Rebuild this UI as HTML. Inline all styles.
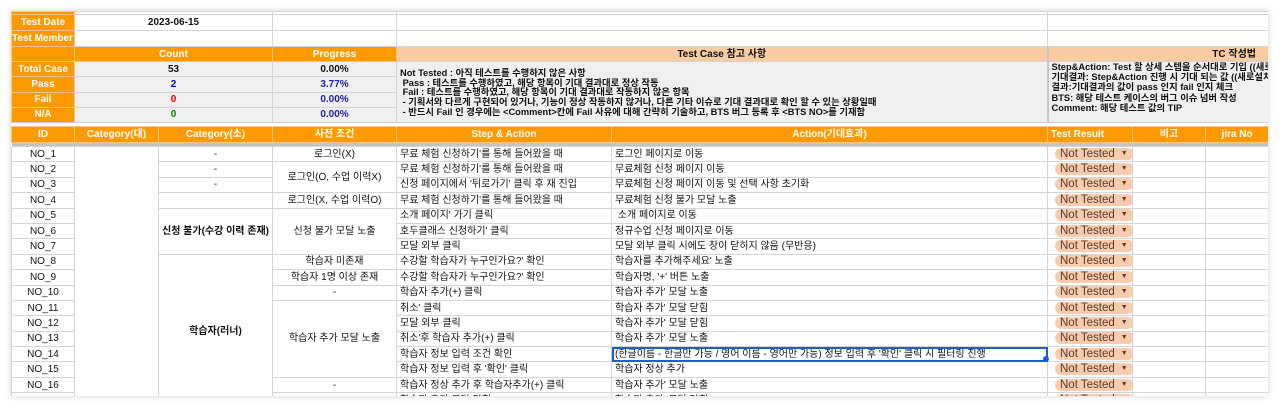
<!DOCTYPE html>
<html><head><meta charset="utf-8"><style>
body{margin:0;background:#fff;width:1280px;height:408px;overflow:hidden;font-family:"Liberation Sans","Noto Sans CJK KR",sans-serif;}
#wrap{position:absolute;left:11px;top:11px;width:1257px;height:385px;overflow:hidden;box-shadow:0 0 6px rgba(0,0,0,.18);background:#fff}
table{border-collapse:collapse;table-layout:fixed;position:absolute;left:0}
td{padding:0 3px;font-size:10px;color:#111;white-space:nowrap;overflow:hidden;border:1px solid #d4d4d4;line-height:13px}
.o{background:#ff9900;color:#fff;font-weight:bold;text-align:center;border-color:#f3c48a}
.g{background:#efefef;text-align:center;font-weight:bold}
.c{text-align:center}
.p{background:#f8cba0;font-weight:bold;text-align:center}
.note{background:#efefef;vertical-align:top;font-weight:bold;font-size:9.3px;line-height:9.7px;padding-top:7px;white-space:pre;overflow:visible}
.pill{display:inline-block;background:#f9cbad;color:#5a3b2a;border-radius:6px;padding:0 6px 0 5px;height:12px;line-height:12px;font-size:11.5px;margin-left:4px}
.pill b{font-size:7px;margin-left:6px;vertical-align:2px}
#data td{height:14.4px;}
</style></head><body>
<div id="wrap">
<table style="top:0;width:1257px">
<colgroup><col style="width:63px"><col style="width:198px"><col style="width:124px"><col style="width:651px"><col style="width:221px"></colgroup>
<tr style="height:3px"><td class="o"></td><td></td><td></td><td></td><td></td></tr>
<tr style="height:16px"><td class="o">Test Date</td><td class="c" style="font-weight:bold">2023-06-15</td><td></td><td></td><td></td></tr>
<tr style="height:16px"><td class="o" style="padding:0;text-align:left">Test Member</td><td></td><td></td><td></td><td></td></tr>
<tr style="height:15px"><td class="o"></td><td class="o">Count</td><td class="o">Progress</td><td class="p">Test Case 참고 사항</td><td class="p" style="text-align:right;padding-right:12px;border-left:2px solid #c8c8c8">TC 작성법</td></tr>
<tr style="height:15.25px"><td class="o">Total Case</td><td class="g">53</td><td class="g">0.00%</td>
<td class="note" rowspan="4">Not Tested : 아직 테스트를 수행하지 않은 사항
 Pass : 테스트를 수행하였고, 해당 항목이 기대 결과대로 정상 작동
 Fail : 테스트를 수행하였고, 해당 항목이 기대 결과대로 작동하지 않은 항목
 - 기획서와 다르게 구현되어 있거나, 기능이 정상 작동하지 않거나, 다른 기타 이슈로 기대 결과대로 확인 할 수 있는 상황일때
 - 반드시 Fail 인 경우에는 &lt;Comment&gt;칸에 Fail 사유에 대해 간략히 기술하고, BTS 버그 등록 후 &lt;BTS NO&gt;를 기재함</td>
<td class="note" rowspan="4" style="padding-top:0;line-height:10.2px;overflow:hidden;border-left:2px solid #c8c8c8;vertical-align:top">Step&amp;Action: Test 할 상세 스텝을 순서대로 기입 ((새로
기대결과: Step&amp;Action 진행 시 기대 되는 값 ((새로설치
결과:기대결과의 값이 pass 인지 fail 인지 체크
BTS: 해당 테스트 케이스의 버그 이슈 넘버 작성
Comment: 해당 테스트 값의 TIP</td></tr>
<tr style="height:15.25px"><td class="o">Pass</td><td class="g" style="color:#0000e0">2</td><td class="g" style="color:#2020b0">3.77%</td></tr>
<tr style="height:15.25px"><td class="o">Fail</td><td class="g" style="color:#e00000">0</td><td class="g" style="color:#2020b0">0.00%</td></tr>
<tr style="height:15.25px"><td class="o">N/A</td><td class="g" style="color:#008000">0</td><td class="g" style="color:#2020b0">0.00%</td></tr>
</table>
<div style="position:absolute;top:111px;left:0;width:1257px;height:4px;background:#fff;border-top:1px solid #ccc"></div>
<table id="data" style="top:115px;width:1257px">
<colgroup><col style="width:63px"><col style="width:84px"><col style="width:114px"><col style="width:124px"><col style="width:215px"><col style="width:436px"><col style="width:85px"><col style="width:73px"><col style="width:63px"></colgroup>
<tr style="height:16px"><td class="o">ID</td><td class="o">Category(대)</td><td class="o">Category(소)</td><td class="o">사전 조건</td><td class="o">Step &amp; Action</td><td class="o">Action(기대효과)</td><td class="o" style="text-align:left">Test Result</td><td class="o">비고</td><td class="o">jira No</td></tr>
<tr style="height:4px"><td colspan="9" style="background:#c4c4c4;height:3px;border:none;padding:0"></td></tr>
<tr><td class="c">NO_1</td><td rowspan="17"></td><td class="c">-</td><td class="c">로그인(X)</td><td>무료 체험 신청하기'를 통해 들어왔을 때</td><td>로그인 페이지로 이동</td><td><span class="pill">Not Tested<b>▼</b></span></td><td></td><td></td></tr>
<tr><td class="c">NO_2</td><td class="c">-</td><td class="c" rowspan="2">로그인(O, 수업 이력X)</td><td>무료 체험 신청하기'를 통해 들어왔을 때</td><td>무료체험 신청 페이지 이동</td><td><span class="pill">Not Tested<b>▼</b></span></td><td></td><td></td></tr>
<tr><td class="c">NO_3</td><td class="c">-</td><td>신청 페이지에서 '뒤로가기' 클릭 후 재 진입</td><td>무료체험 신청 페이지 이동 및 선택 사항 초기화</td><td><span class="pill">Not Tested<b>▼</b></span></td><td></td><td></td></tr>
<tr><td class="c">NO_4</td><td></td><td class="c">로그인(X, 수업 이력O)</td><td>무료 체험 신청하기'를 통해 들어왔을 때</td><td>무료체험 신청 불가 모달 노출</td><td><span class="pill">Not Tested<b>▼</b></span></td><td></td><td></td></tr>
<tr><td class="c">NO_5</td><td class="c" rowspan="3" style="font-weight:bold;padding:0">신청 불가(수강 이력 존재)</td><td class="c" rowspan="3">신청 불가 모달 노출</td><td>소개 페이지' 가기 클릭</td><td>&nbsp;소개 페이지로 이동</td><td><span class="pill">Not Tested<b>▼</b></span></td><td></td><td></td></tr>
<tr><td class="c">NO_6</td><td>호두클래스 신청하기' 클릭</td><td>정규수업 신청 페이지로 이동</td><td><span class="pill">Not Tested<b>▼</b></span></td><td></td><td></td></tr>
<tr><td class="c">NO_7</td><td>모달 외부 클릭</td><td>모달 외부 클릭 시에도 창이 닫히지 않음 (무반응)</td><td><span class="pill">Not Tested<b>▼</b></span></td><td></td><td></td></tr>
<tr><td class="c">NO_8</td><td class="c" rowspan="10" style="font-weight:bold">학습자(러너)</td><td class="c">학습자 미존재</td><td>수강할 학습자가 누구인가요?' 확인</td><td>학습자를 추가해주세요' 노출</td><td><span class="pill">Not Tested<b>▼</b></span></td><td></td><td></td></tr>
<tr><td class="c">NO_9</td><td class="c">학습자 1명 이상 존재</td><td>수강할 학습자가 누구인가요?' 확인</td><td>학습자명, '+' 버튼 노출</td><td><span class="pill">Not Tested<b>▼</b></span></td><td></td><td></td></tr>
<tr><td class="c">NO_10</td><td class="c">-</td><td>학습자 추가(+) 클릭</td><td>학습자 추가' 모달 노출</td><td><span class="pill">Not Tested<b>▼</b></span></td><td></td><td></td></tr>
<tr><td class="c">NO_11</td><td class="c" rowspan="5">학습자 추가 모달 노출</td><td>취소' 클릭</td><td>학습자 추가' 모달 닫힘</td><td><span class="pill">Not Tested<b>▼</b></span></td><td></td><td></td></tr>
<tr><td class="c">NO_12</td><td>모달 외부 클릭</td><td>학습자 추가' 모달 닫힘</td><td><span class="pill">Not Tested<b>▼</b></span></td><td></td><td></td></tr>
<tr><td class="c">NO_13</td><td>취소'후 학습자 추가(+) 클릭</td><td>학습자 추가' 모달 노출</td><td><span class="pill">Not Tested<b>▼</b></span></td><td></td><td></td></tr>
<tr><td class="c">NO_14</td><td>학습자 정보 입력 조건 확인</td><td style="outline:2px solid #1a5fd0;outline-offset:-2px;position:relative">(한글이름 - 한글만 가능 / 영어 이름 - 영어만 가능) 정보 입력 후 '확인' 클릭 시 필터링 진행</td><td><span class="pill">Not Tested<b>▼</b></span></td><td></td><td></td></tr>
<tr><td class="c">NO_15</td><td>학습자 정보 입력 후 '확인' 클릭</td><td>학습자 정상 추가</td><td><span class="pill">Not Tested<b>▼</b></span></td><td></td><td></td></tr>
<tr><td class="c">NO_16</td><td class="c">-</td><td>학습자 정상 추가 후 학습자추가(+) 클릭</td><td>학습자 추가' 모달 노출</td><td><span class="pill">Not Tested<b>▼</b></span></td><td></td><td></td></tr>
<tr><td class="c">NO_17</td><td class="c">-</td><td>학습자 추가 모달 닫힘</td><td>학습자 추가' 모달 닫힘</td><td><span class="pill">Not Tested<b>▼</b></span></td><td></td><td></td></tr>
</table>
<div style="position:absolute;left:1032px;top:345px;width:6px;height:6px;border-radius:50%;background:#1a5fd0"></div>
</div>
</body></html>
